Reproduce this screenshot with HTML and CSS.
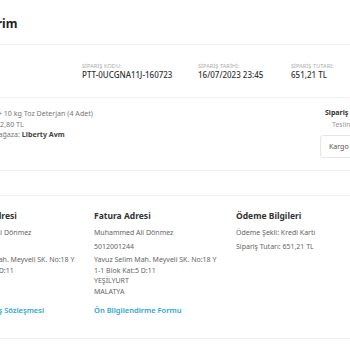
FILE: index.html
```html
<!DOCTYPE html>
<html lang="tr">
<head>
<meta charset="utf-8">
<link rel="stylesheet" href="styles.css">
</head>
<body>
<div class="page">
  <header class="top">
    <h1 class="title">Siparişlerim</h1>
  </header>
  <section class="meta">
    <div class="meta-item">
      <div class="meta-label">SİPARİŞ KODU:</div>
      <div class="meta-value">PTT-0UCGNA11J-160723</div>
    </div>
    <div class="meta-item">
      <div class="meta-label">SİPARİŞ TARİHİ:</div>
      <div class="meta-value">16/07/2023 23:45</div>
    </div>
    <div class="meta-item">
      <div class="meta-label">SİPARİŞ TUTARI:</div>
      <div class="meta-value">651,21 TL</div>
    </div>
  </section>
  <section class="card product">
    <div class="product-info">
      <div class="line">5 + 10 kg Toz Deterjan (4 Adet)</div>
      <div class="line">162,80 TL</div>
      <div class="line">Mağaza: <strong>Liberty Avm</strong></div>
    </div>
    <div class="status">
      <div class="status-title">Sipariş Durumu</div>
      <div class="status-text">Teslim Edildi</div>
      <button class="btn">Kargo Takibi</button>
    </div>
  </section>
  <section class="card address">
    <div class="col">
      <h2 class="col-title">Teslimat Adresi</h2>
      <p>Muhammed Ali Dönmez</p>
      <p>5012001244</p>
      <p>Yavuz Selim Mah. Meyveli SK. No:18 Y<br>1-1 Blok Kat:5 D:11<br>YEŞİLYURT<br>MALATYA</p>
      <a class="link" href="#">Mesafeli Satış Sözleşmesi</a>
    </div>
    <div class="col">
      <h2 class="col-title">Fatura Adresi</h2>
      <p>Muhammed Ali Dönmez</p>
      <p>5012001244</p>
      <p>Yavuz Selim Mah. Meyveli SK. No:18 Y<br>1-1 Blok Kat:5 D:11<br>YEŞİLYURT<br>MALATYA</p>
      <a class="link" href="#">Ön Bilgilendirme Formu</a>
    </div>
    <div class="col">
      <h2 class="col-title">Ödeme Bilgileri</h2>
      <p>Ödeme Şekli: Kredi Kartı</p>
      <p>Sipariş Tutarı: 651,21 TL</p>
    </div>
  </section>
</div>
</body>
</html>
```

FILE: styles.css
```css
html, body {
  margin: 0;
  padding: 0;
  background: #fff;
  overflow: hidden;
}
body {
  font-family: "Noto Sans", "Open Sans", sans-serif;
  color: #333;
}
.page {
  width: 480px;
  margin-left: -48px;
}
.top {
  height: 44px;
  display: flex;
  align-items: center;
  border-bottom: 1px solid #eeeeee;
}
.title {
  margin: 3px 0 0 -6px;
  font-size: 12px;
  font-weight: 700;
  color: #222;
}
.meta {
  display: grid;
  grid-template-columns: 116px 93px auto;
  padding: 17px 0 0 130px;
  height: 35px;
}
.meta-label {
  font-size: 5.5px;
  color: #aaa;
  line-height: 8px;
  letter-spacing: 0.1px;
}
.meta-value {
  font-size: 8px;
  font-weight: 500;
  color: #333;
  line-height: 10px;
}
.card {
  border-top: 1px solid #f0f0f0;
  border-bottom: 1px solid #f0f0f0;
}
.product {
  display: flex;
  justify-content: space-between;
  height: 74px;
  padding-top: 10px;
  box-sizing: border-box;
}
.product-info {
  padding-left: 40px;
  font-size: 7.1px;
  line-height: 10.5px;
  color: #777;
}
.product-info strong {
  color: #444;
}
.status {
  width: 110px;
  margin-right: 2px;
  display: flex;
  flex-direction: column;
  align-items: flex-start;
  font-size: 7px;
}
.status-title {
  font-weight: 700;
  color: #333;
  line-height: 10px;
  margin-left: 5px;
}
.status-text {
  color: #999;
  line-height: 10px;
  margin: 2px 0 0 12px;
}
.btn {
  margin-top: 5px;
  height: 23px;
  padding: 0 8px;
  border: 1px solid #e6e6e6;
  border-radius: 3px;
  background: #fff;
  font-family: inherit;
  font-size: 7px;
  color: #555;
}
.address {
  margin-top: 24px;
  display: flex;
  padding: 14px 0 23px;
}
.col {
  width: 142px;
  display: flex;
  flex-direction: column;
  align-items: flex-start;
}
.col-title {
  margin: 0 0 7px;
  font-size: 8.5px;
  font-weight: 700;
  color: #333;
  line-height: 11px;
}
.col p {
  margin: 0 0 3px;
  font-size: 7px;
  line-height: 10.5px;
  color: #666;
}
.link {
  margin-top: 5px;
  font-size: 7.5px;
  font-weight: 600;
  color: #2aa6d5;
  text-decoration: none;
  line-height: 10px;
}
```
